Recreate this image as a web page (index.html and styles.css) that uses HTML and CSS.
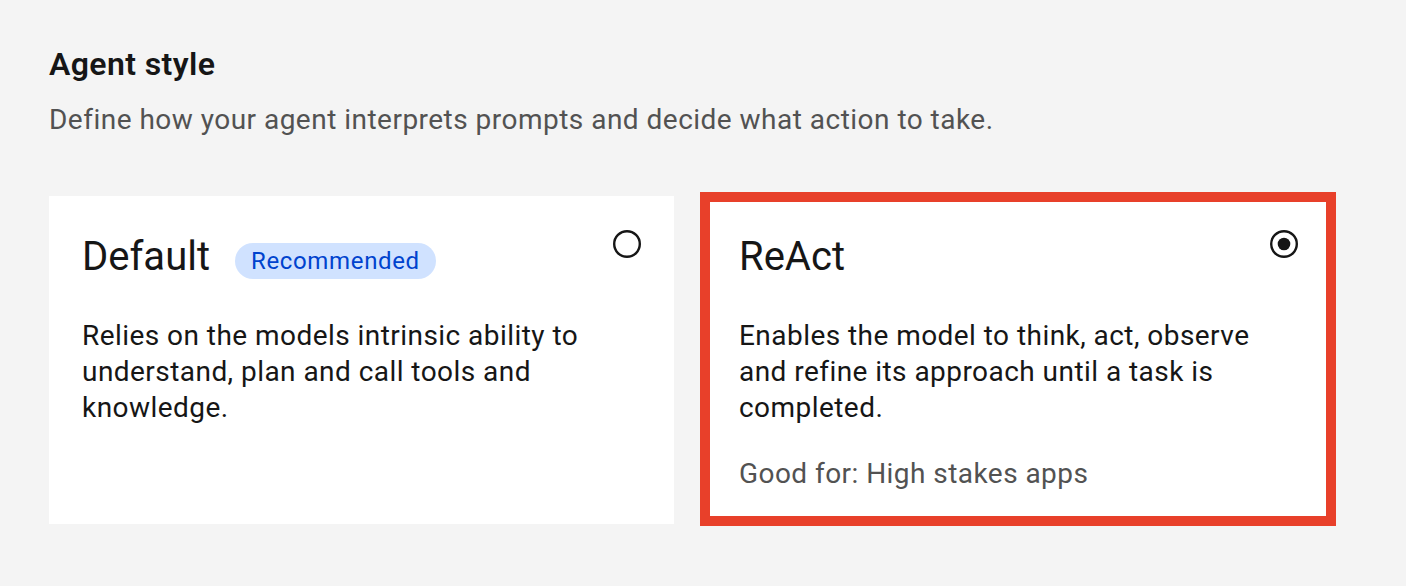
FILE: index.html
```html
<!DOCTYPE html>
<html lang="en">
<head>
<meta charset="utf-8">
<title>Agent style</title>
<link rel="stylesheet" href="styles.css">
</head>
<body>
<main class="page">
  <h2 class="heading">Agent style</h2>
  <p class="subtitle">Define how your agent interprets prompts and decide what action to take.</p>
  <div class="cards">
    <div class="card">
      <div class="card-head">
        <div class="title-row">
          <span class="card-title">Default</span>
          <span class="tag">Recommended</span>
        </div>
        <svg class="radio" width="32" height="32" viewBox="0 0 32 32"><circle cx="16" cy="16" r="12.8" fill="none" stroke="#161616" stroke-width="2.4"/></svg>
      </div>
      <p class="card-body">Relies on the models intrinsic ability to understand, plan and call tools and knowledge.</p>
    </div>
    <div class="card card-selected">
      <div class="card-head">
        <div class="title-row">
          <span class="card-title">ReAct</span>
        </div>
        <svg class="radio" width="32" height="32" viewBox="0 0 32 32"><circle cx="16" cy="16" r="12.8" fill="none" stroke="#161616" stroke-width="2.4"/><circle cx="16" cy="16" r="6.3" fill="#161616"/></svg>
      </div>
      <p class="card-body">Enables the model to think, act, observe and refine its approach until a task is completed.</p>
      <p class="card-note">Good for: High stakes apps</p>
    </div>
  </div>
</main>
</body>
</html>
```
FILE: styles.css
```css
* { box-sizing: border-box; }
html, body { margin: 0; padding: 0; }
body {
  background: #f4f4f4;
  font-family: Roboto, "Liberation Sans", Arial, sans-serif;
  color: #161616;
  width: 1406px;
  height: 586px;
  overflow: hidden;
}
.page {
  padding: 44px 0 0 49px;
}
.heading {
  margin: 0;
  font-size: 32px;
  line-height: 40px;
  font-weight: 600;
  letter-spacing: 0.4px;
  color: #161616;
}
.subtitle {
  margin: 18px 0 0;
  font-size: 28px;
  line-height: 36px;
  letter-spacing: 0.48px;
  color: #525252;
}
.cards {
  margin-top: 58px;
  display: grid;
  grid-template-columns: 625px 625px;
  column-gap: 32px;
}
.card {
  position: relative;
  background: #ffffff;
  padding: 32px 32px 32px 33px;
  min-height: 328px;
}
.card-selected::after {
  content: "";
  position: absolute;
  top: -4px;
  left: -6px;
  right: -5px;
  bottom: -2px;
  border: 10px solid #e8402a;
  pointer-events: none;
}
.card-head {
  display: flex;
  justify-content: space-between;
  align-items: flex-start;
}
.title-row {
  display: flex;
  align-items: baseline;
  gap: 25px;
}
.card-title {
  font-size: 40px;
  line-height: 58px;
  font-weight: 400;
  color: #161616;
}
.tag {
  display: inline-block;
  height: 36px;
  padding: 0 16px;
  border-radius: 18px;
  background: #d0e2ff;
  color: #0043ce;
  font-size: 24px;
  line-height: 36px;
  letter-spacing: 0.65px;
  position: relative;
  top: -1px;
}
.radio {
  display: block;
  margin-top: 0;
  margin-right: -1px;
}
.card-body {
  margin: 32px 0 0;
  font-size: 28px;
  line-height: 36px;
  letter-spacing: 0.45px;
  color: #161616;
  max-width: 545px;
}
.card-note {
  margin: 30px 0 0;
  font-size: 28px;
  line-height: 36px;
  letter-spacing: 0.45px;
  color: #525252;
}
```
